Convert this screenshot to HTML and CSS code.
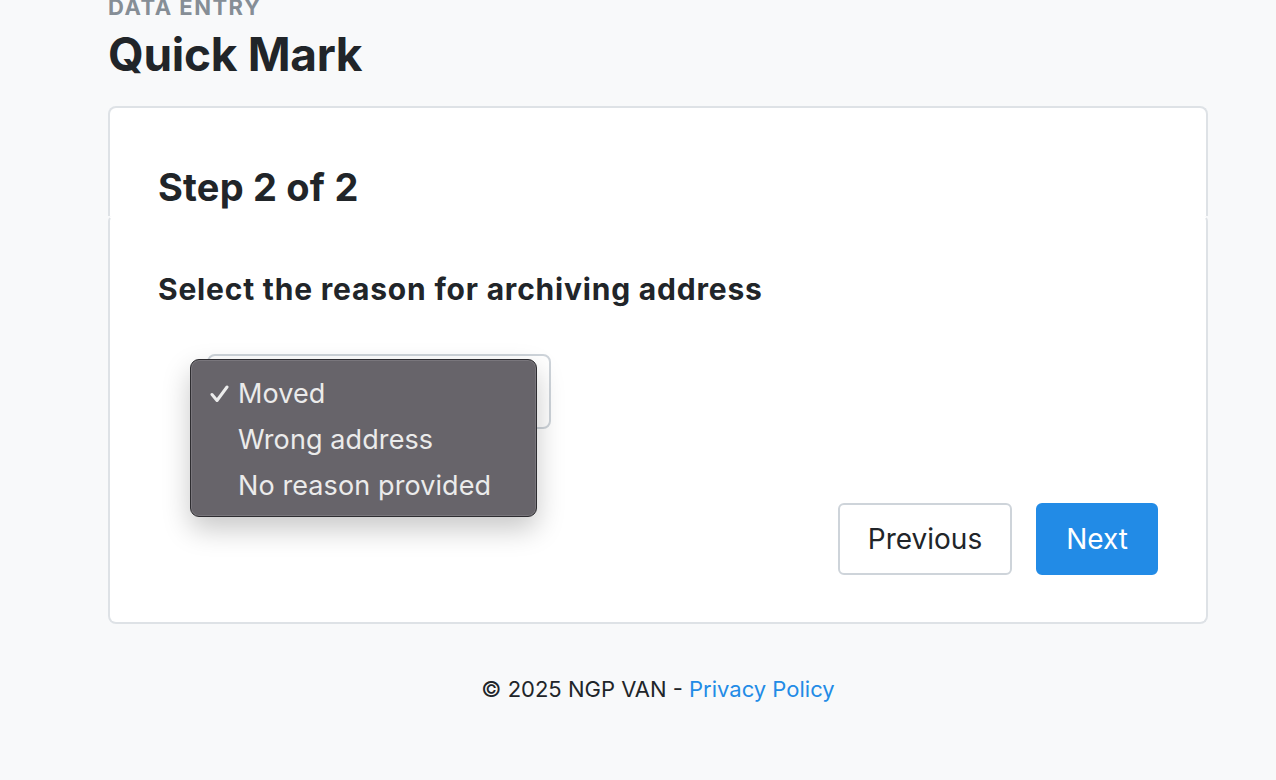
FILE: index.html
```html
<!DOCTYPE html>
<html>
<head>
<meta charset="utf-8">
<link rel="stylesheet" href="styles.css">
</head>
<body>
<div class="page">
  <div class="eyebrow">DATA ENTRY</div>
  <h1 class="title">Quick Mark</h1>
  <div class="card">
    <div class="card-header">
      <h2 class="step">Step 2 of 2</h2>
    </div>
    <div class="card-body">
      <h3 class="question">Select the reason for archiving address</h3>
      <div class="select-wrap">
        <div class="select"></div>
        <ul class="menu">
          <li class="opt checked"><svg class="check" width="19" height="18" viewBox="0 0 19 18"><polyline points="2,9.5 7,15.5 17,2" fill="none" stroke="#ececec" stroke-width="3" stroke-linecap="round" stroke-linejoin="round"/></svg>Moved</li>
          <li class="opt">Wrong address</li>
          <li class="opt">No reason provided</li>
        </ul>
      </div>
      <div class="actions">
        <button class="btn btn-outline">Previous</button>
        <button class="btn btn-primary">Next</button>
      </div>
    </div>
  </div>
  <footer class="footer">© 2025 NGP VAN - <a href="#" class="link">Privacy Policy</a></footer>
</div>
</body>
</html>
```

FILE: styles.css
```css
* { box-sizing: border-box; }
html, body { margin: 0; padding: 0; }
body {
  background: #f8f9fa;
  font-family: Inter, "Noto Sans", "Liberation Sans", sans-serif;
  color: #212529;
  height: 780px;
  overflow: hidden;
}
.page {
  width: 1100px;
  margin-left: 108px;
  margin-top: -5px;
}
.eyebrow {
  font-size: 22px;
  font-weight: 700;
  color: #868e96;
  letter-spacing: 1.5px;
  line-height: 24px;
}
.title {
  margin: 8px 0 0;
  font-size: 46px;
  font-weight: 700;
  line-height: 54px;
  letter-spacing: -0.3px;
}
.card {
  margin-top: 25px;
}
.card-header {
  background: #fff;
  border: 2px solid #dee2e6;
  border-bottom: none;
  border-radius: 8px 8px 0 0;
  height: 110px;
  padding: 57px 48px 0;
}
.step {
  margin: 0;
  font-size: 38px;
  line-height: 44px;
  font-weight: 700;
  letter-spacing: 0.2px;
}
.card-body {
  background: #fff;
  border: 2px solid #dee2e6;
  border-top: 2px solid #fff;
  border-radius: 5px 5px 8px 8px;
  height: 408px;
  padding: 52px 48px 48px;
}
.question {
  margin: 0;
  font-size: 30px;
  line-height: 38px;
  font-weight: 700;
  letter-spacing: 0.8px;
}
.select-wrap {
  position: relative;
  margin-top: 46px;
  height: 75px;
}
.select {
  margin-left: 49px;
  width: 344px;
  height: 75px;
  border: 2px solid #ced4da;
  border-radius: 8px;
  background: #fff;
}
.menu {
  position: absolute;
  left: 32px;
  top: 5px;
  width: 347px;
  height: 158px;
  margin: 0;
  padding: 11px 0 0;
  list-style: none;
  background: #67646a;
  border: 1px solid #2e2d31;
  border-radius: 9px;
  box-shadow: 0 12px 28px rgba(0,0,0,0.22), 0 0 0 1px rgba(255,255,255,0.12) inset;
}
.opt {
  position: relative;
  padding-left: 47px;
  font-size: 27px;
  line-height: 46px;
  color: #ebebeb;
  letter-spacing: 0.1px;
}
.check {
  position: absolute;
  left: 19px;
  top: 14px;
}
.actions {
  display: flex;
  justify-content: flex-end;
  gap: 24px;
  margin-top: 74px;
}
.btn {
  height: 72px;
  font-family: inherit;
  font-size: 28px;
  border-radius: 6px;
  padding: 0 28px;
  cursor: pointer;
}
.btn-outline {
  background: #fff;
  color: #212529;
  border: 2px solid #ced4da;
}
.btn-primary {
  background: #228be6;
  color: #fff;
  border: 2px solid #228be6;
}
.footer {
  margin-top: 50px;
  text-align: center;
  font-size: 22px;
  line-height: 30px;
  color: #212529;
}
.link {
  color: #228be6;
  text-decoration: none;
}
```
